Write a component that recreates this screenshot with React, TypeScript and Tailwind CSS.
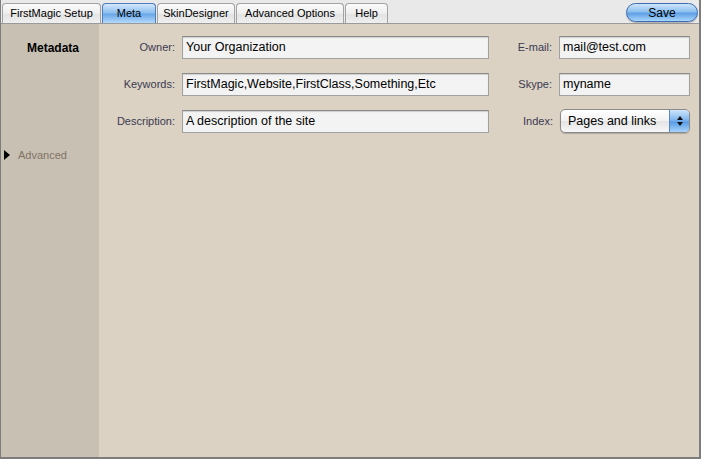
import React from "react";

const font = { fontFamily: '"Liberation Sans", Arial, sans-serif' };

function Tab({ label, active, w }: { label: string; active?: boolean; w: string }) {
  return (
    <div
      className={`${w} h-[20px] flex items-center justify-center rounded-t-[4px] border border-b-0 text-[11px] ${
        active
          ? "border-[#4f7db8] bg-[linear-gradient(#d6e8fc,#8ebfef_45%,#6aa7e8_55%,#b5dafc)] text-black"
          : "border-[#a3a3a3] bg-[linear-gradient(#fbfbfb,#eeeeee_50%,#e2e2e2_51%,#efefef)] text-black"
      }`}
    >
      {label}
    </div>
  );
}

function Field({ value, w }: { value: string; w: string }) {
  return (
    <div
      className={`${w} h-[23px] border border-[#a0a0a0] border-t-[#8a8a8a] bg-[#f3f3f3] flex items-center px-[3px] text-[12.5px] text-black shadow-[inset_0_1px_1px_rgba(0,0,0,0.15)]`}
    >
      <div>{value}</div>
    </div>
  );
}

function Label({ text, w }: { text: string; w: string }) {
  return <div className={`${w} text-right text-[11px] text-[#3a3a52] pr-[7px]`}>{text}</div>;
}

export default function App() {
  return (
    <div className="w-[720px] h-[466px] bg-white" style={font}>
      <div className="w-[701px] h-[459px] border-l border-r-2 border-b-2 border-[#7d7d7d] flex flex-col bg-[#dbd2c3]">
        {/* Top bar */}
        <div className="h-[24px] bg-[#e9e9e9] border-b border-[#9a9a9a] flex items-end justify-between pl-[1px] pr-[1px] relative">
          <div className="flex items-end gap-[1px] h-full pt-[2px]">
            <Tab label="FirstMagic Setup" w="w-[99px]" />
            <Tab label="Meta" w="w-[54px]" active />
            <Tab label="SkinDesigner" w="w-[78px]" />
            <Tab label="Advanced Options" w="w-[108px]" />
            <Tab label="Help" w="w-[43px]" />
          </div>
          <div className="self-start mt-[3px] w-[72px] h-[19px] rounded-full border border-[#3d6db0] bg-[linear-gradient(#cfe5fb,#8dc0f0_45%,#5fa0e6_55%,#a9d6fb)] flex items-center justify-center text-[12px] text-black shadow-[0_1px_1px_rgba(0,0,0,0.25)]">
            Save
          </div>
        </div>
        <div className="flex flex-1">
          {/* Sidebar */}
          <div className="w-[98px] bg-[#c9c0b4] flex flex-col">
            <div className="mt-[15px] pl-[6px] text-center text-[12px] font-bold text-black">Metadata</div>
            <div className="mt-[90px] flex items-center">
              <svg width="8" height="10" viewBox="0 0 8 10" className="ml-[2px]">
                <path d="M1 0 L7 5 L1 10 Z" fill="#000" />
              </svg>
              <span className="ml-[7px] text-[11px] text-[#7f7465]">Advanced</span>
            </div>
          </div>
          {/* Main */}
          <div className="flex-1 pt-[11px] flex flex-col gap-[13px]">
            <div className="flex items-center h-[24px]">
              <Label text="Owner:" w="w-[83px]" />
              <Field value="Your Organization" w="w-[307px]" />
              <Label text="E-mail:" w="w-[70px]" />
              <Field value="mail@test.com" w="w-[131px]" />
            </div>
            <div className="flex items-center h-[24px]">
              <Label text="Keywords:" w="w-[83px]" />
              <Field value="FirstMagic,Website,FirstClass,Something,Etc" w="w-[307px]" />
              <Label text="Skype:" w="w-[70px]" />
              <Field value="myname" w="w-[131px]" />
            </div>
            <div className="flex items-center h-[24px]">
              <Label text="Description:" w="w-[83px]" />
              <Field value="A description of the site" w="w-[307px]" />
              <Label text="Index:" w="w-[71px]" />
              <div className="w-[130px] h-[24px] rounded-[5px] border border-[#8a8a8a] bg-[linear-gradient(#ffffff,#f2f2f2_50%,#e4e4e4_51%,#f7f7f7)] flex items-stretch overflow-hidden shadow-[0_1px_1px_rgba(0,0,0,0.2)]">
                <div className="flex-1 flex items-center pl-[7px] text-[12.5px] text-black">Pages and links</div>
                <div className="w-[20px] border-l border-[#5a86c0] bg-[linear-gradient(#cfe5fb,#7fb6ee_45%,#5a9ce6_55%,#a6d3fb)] flex flex-col items-center justify-center gap-[2px]">
                  <svg width="6" height="4" viewBox="0 0 6 4"><path d="M3 0 L6 4 L0 4 Z" fill="#111" /></svg>
                  <svg width="6" height="4" viewBox="0 0 6 4"><path d="M0 0 L6 0 L3 4 Z" fill="#111" /></svg>
                </div>
              </div>
            </div>
          </div>
        </div>
      </div>
    </div>
  );
}
